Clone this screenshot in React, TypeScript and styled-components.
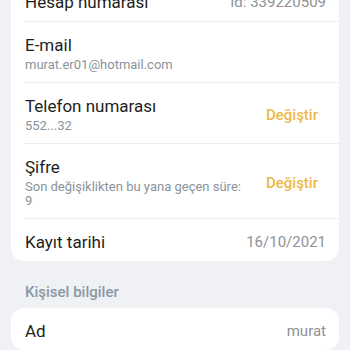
import React from 'react';
import styled, { createGlobalStyle } from 'styled-components';

const GlobalStyle = createGlobalStyle`
  html, body {
    margin: 0;
    padding: 0;
    background: #eff1f5;
    font-family: Roboto, "Noto Sans", "Liberation Sans", sans-serif;
    -webkit-font-smoothing: antialiased;
  }
`;

type Row = {
  title: string;
  subtitle?: string;
  value?: string;
  action?: string;
};

const accountRows: Row[] = [
  { title: 'Hesap numarası', value: 'Id: 339220509' },
  { title: 'E-mail', subtitle: 'murat.er01@hotmail.com' },
  { title: 'Telefon numarası', subtitle: '552...32', action: 'Değiştir' },
  {
    title: 'Şifre',
    subtitle: 'Son değişiklikten bu yana geçen süre: 9',
    action: 'Değiştir',
  },
  { title: 'Kayıt tarihi', value: '16/10/2021' },
];

const personalRows: Row[] = [{ title: 'Ad', value: 'murat' }];

function InfoCard({ rows, scrolled }: { rows: Row[]; scrolled?: boolean }) {
  return (
    <Card $scrolled={scrolled}>
      {rows.map((row) => (
        <Item key={row.title}>
          <Texts>
            <Title>{row.title}</Title>
            {row.subtitle && <Subtitle>{row.subtitle}</Subtitle>}
          </Texts>
          {row.value && <Value>{row.value}</Value>}
          {row.action && <Action type="button">{row.action}</Action>}
        </Item>
      ))}
    </Card>
  );
}

export default function App() {
  return (
    <Page>
      <GlobalStyle />
      <InfoCard rows={accountRows} scrolled />
      <SectionTitle>Kişisel bilgiler</SectionTitle>
      <InfoCard rows={personalRows} />
    </Page>
  );
}

const Page = styled.main`
  height: 350px;
  overflow: hidden;
  padding: 0 11px;
  display: flex;
  flex-direction: column;
`;

const Card = styled.section<{ $scrolled?: boolean }>`
  background: #ffffff;
  border-radius: 13px;
  margin-top: ${(p) => (p.$scrolled ? '-21px' : '0')};
  flex-shrink: 0;
`;

const Item = styled.div`
  display: flex;
  align-items: center;
  gap: 14px;
  margin-left: 13px;
  padding: 12px 13px 8px 1px;
  border-bottom: 1px solid #eceef1;

  &:last-child {
    border-bottom: none;
  }
`;

const Texts = styled.div`
  flex: 1;
  min-width: 0;
  display: flex;
  flex-direction: column;
`;

const Title = styled.div`
  color: #1e1f21;
  font-size: 17px;
  line-height: 22px;
`;

const Subtitle = styled.div`
  color: #8a939c;
  font-size: 13px;
  line-height: 13.5px;
  margin-top: 2px;
  padding-bottom: 2.5px;
`;

const Value = styled.div`
  color: #8f9295;
  font-size: 15px;
  line-height: 22px;
  white-space: nowrap;
`;

const Action = styled.button`
  border: none;
  background: none;
  padding: 4px 8px;
  color: #ebb94a;
  font-family: inherit;
  font-size: 15px;
  font-weight: 500;
  white-space: nowrap;
  cursor: pointer;
`;

const SectionTitle = styled.h2`
  margin: 0;
  padding: 21px 14px 6px;
  color: #8997a4;
  font-size: 15px;
  font-weight: 500;
  line-height: 20px;
`;
